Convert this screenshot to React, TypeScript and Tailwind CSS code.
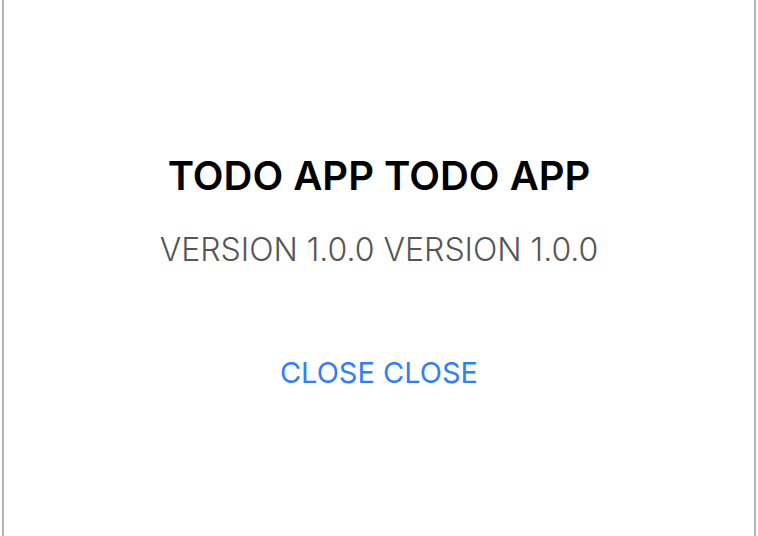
export default function App() {
  return (
    <div className="h-[536px] w-[758px] bg-white font-['Inter',sans-serif]">
      <div className="mx-[2px] flex h-full flex-col items-center border-x-2 border-[#b3b3b3] pt-[152px]">
        <h1 className="text-[40px] font-semibold leading-[48px] text-black">TODO APP TODO APP</h1>
        <p className="mt-[31px] text-[32px] font-light leading-[38px] text-[#555555]">VERSION 1.0.0 VERSION 1.0.0</p>
        <button className="mt-[87px] text-[29px] font-normal leading-[34px] text-[#2f80f5]">CLOSE CLOSE</button>
      </div>
    </div>
  )
}
